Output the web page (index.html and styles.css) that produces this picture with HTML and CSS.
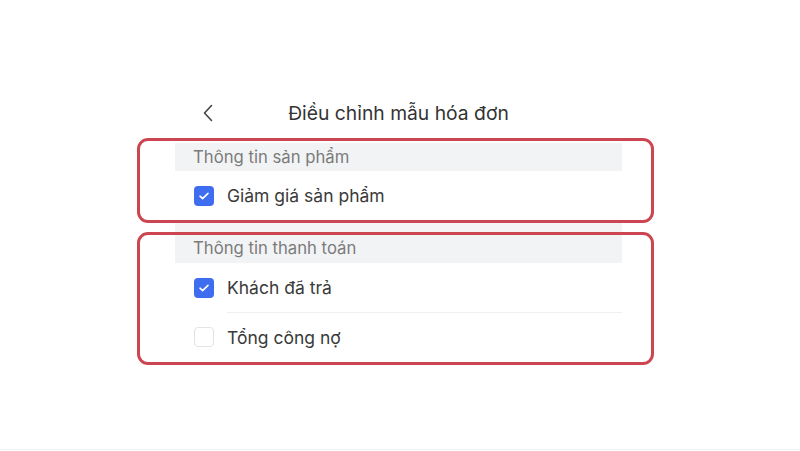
FILE: index.html
```html
<!DOCTYPE html>
<html lang="vi">
<head>
    <meta charset="UTF-8">
    <meta name="viewport" content="width=device-width, initial-scale=1.0">
    <title>Điều chỉnh mẫu hóa đơn</title>
    <link rel="stylesheet" href="styles.css">
</head>
<body>
    <div class="page">
      <div class="topbar">
        <a class="back" href="#">
          <svg width="10" height="18" viewBox="0 0 10 18"><path d="M8.5 1.5 1.5 9l7 7.5" fill="none" stroke="#444" stroke-width="1.6" stroke-linecap="round" stroke-linejoin="round"/></svg>
        </a>
        <h1>Điều chỉnh mẫu hóa đơn</h1>
      </div>

      <div class="box">
        <div class="group-title">Thông tin sản phẩm</div>
        <label class="row">
          <span class="check checked"><svg width="12" height="10" viewBox="0 0 12 10"><path d="M2 5.2 4.6 7.6 10 2.4" fill="none" stroke="#fff" stroke-width="1.6" stroke-linecap="round" stroke-linejoin="round"/></svg></span>
          <span class="label">Giảm giá sản phẩm</span>
        </label>
      </div>

      <div class="gap"></div>

      <div class="box">
        <div class="group-title low">Thông tin thanh toán</div>
        <label class="row">
          <span class="check checked"><svg width="12" height="10" viewBox="0 0 12 10"><path d="M2 5.2 4.6 7.6 10 2.4" fill="none" stroke="#fff" stroke-width="1.6" stroke-linecap="round" stroke-linejoin="round"/></svg></span>
          <span class="label">Khách đã trả</span>
        </label>
        <label class="row">
          <span class="check"></span>
          <span class="label">Tổng công nợ</span>
        </label>
      </div>
    </div>
    <div class="footer"></div>
</body>
</html>
```

FILE: styles.css
```css
body {
  margin: 0;
  min-height: 100vh;
  display: flex;
  flex-direction: column;
  font-family: Inter, "Noto Sans", sans-serif;
  background: #fff;
  color: #333;
}
.page {
  width: 447px;
  margin: 0 auto;
  padding: 95px 3px 0 0;
}
.topbar {
  height: 36px;
  display: flex;
  align-items: center;
  justify-content: center;
  position: relative;
}
.back {
  position: absolute;
  left: 28px;
  top: 9px;
  display: flex;
}
h1 {
  margin: 0;
  font-size: 19.3px;
  font-weight: 400;
  color: #333;
}
.box {
  margin: 7px -32px 0 -38px;
  padding: 2px 29px 0 35px;
  border: 3px solid #cc4651;
  border-radius: 11px;
}
.gap + .box {
  margin-top: 0;
  padding-top: 0;
  padding-bottom: 1px;
}
.gap {
  height: 9px;
  background: #f6f3f4;
}
.group-title {
  height: 28px;
  padding-left: 18px;
  display: flex;
  align-items: center;
  background: #f2f3f5;
  color: #7b7b7b;
  font-size: 16.7px;
}
.group-title.low {
  padding-top: 0;
  padding-bottom: 3px;
  height: 25px;
}
.row {
  height: 49px;
  display: flex;
  align-items: center;
  padding-left: 19px;
  cursor: pointer;
}
.check {
  width: 20px;
  height: 20px;
  box-sizing: border-box;
  border-radius: 4px;
  border: 1.5px solid #e3e3e3;
  background: #fff;
  margin-right: 13px;
  display: flex;
  align-items: center;
  justify-content: center;
}
.check.checked {
  border: none;
  background: #3f6df0;
}
.label {
  flex: 1;
  align-self: stretch;
  display: flex;
  align-items: center;
  font-size: 17.5px;
  color: #3a3a3a;
}
.row + .row .label {
  border-top: 1px solid #efefef;
}
.footer {
  margin-top: auto;
  height: 1px;
  border-top: 1px solid #eef2f2;
}
```
